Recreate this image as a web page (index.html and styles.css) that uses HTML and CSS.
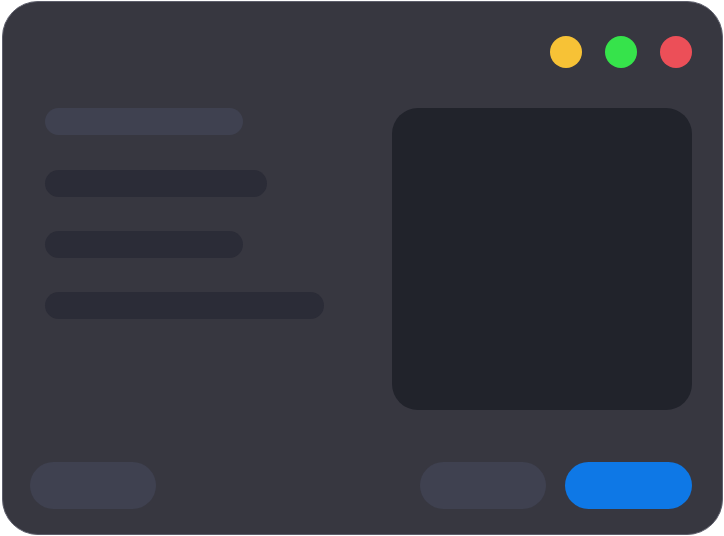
FILE: index.html
```html
<!DOCTYPE html>
<html>
<head>
<meta charset="utf-8">
<link rel="stylesheet" href="styles.css">
</head>
<body>
<div class="window">
  <div class="titlebar">
    <span class="dot dot-yellow"></span>
    <span class="dot dot-green"></span>
    <span class="dot dot-red"></span>
  </div>
  <div class="main">
    <div class="lines">
      <div class="line line-light w198"></div>
      <div class="line w222"></div>
      <div class="line w198"></div>
      <div class="line w279"></div>
    </div>
    <div class="panel"></div>
  </div>
  <div class="footer">
    <div class="btn btn-gray"></div>
    <div class="actions">
      <div class="btn btn-gray"></div>
      <div class="btn btn-blue"></div>
    </div>
  </div>
</div>
</body>
</html>
```
FILE: styles.css
```css
html, body {
  margin: 0;
  padding: 0;
  background: #ffffff;
}
body {
  width: 724px;
  height: 536px;
  overflow: hidden;
}
.window {
  box-sizing: border-box;
  margin: 1px 1px 1px 2px;
  width: 721px;
  height: 534px;
  border: 1px solid #5d5e6b;
  border-radius: 36px;
  background: #373740;
  padding: 34px 30px 25px 27px;
  display: flex;
  flex-direction: column;
}
.titlebar {
  display: flex;
  justify-content: flex-end;
  gap: 23px;
}
.dot {
  width: 32px;
  height: 32px;
  border-radius: 50%;
}
.dot-yellow { background: #f7c236; }
.dot-green { background: #36e34b; }
.dot-red { background: #ec4f58; }
.main {
  margin-top: 40px;
  display: flex;
  justify-content: space-between;
  align-items: flex-start;
}
.lines {
  margin-left: 15px;
  display: flex;
  flex-direction: column;
  gap: 34px;
}
.line {
  height: 27px;
  border-radius: 14px;
  background: #2b2c37;
}
.line-light {
  background: #3f4150;
  margin-bottom: 1px;
}
.w198 { width: 198px; }
.w222 { width: 222px; }
.w279 { width: 279px; }
.panel {
  width: 300px;
  height: 302px;
  border-radius: 26px;
  background: #21232b;
}
.footer {
  margin-top: auto;
  display: flex;
  justify-content: space-between;
  align-items: center;
}
.actions {
  display: flex;
  gap: 19px;
}
.btn {
  width: 126px;
  height: 47px;
  border-radius: 24px;
}
.btn-gray { background: #3f4150; }
.btn-blue { background: #0e78e6; width: 127px; }
```
